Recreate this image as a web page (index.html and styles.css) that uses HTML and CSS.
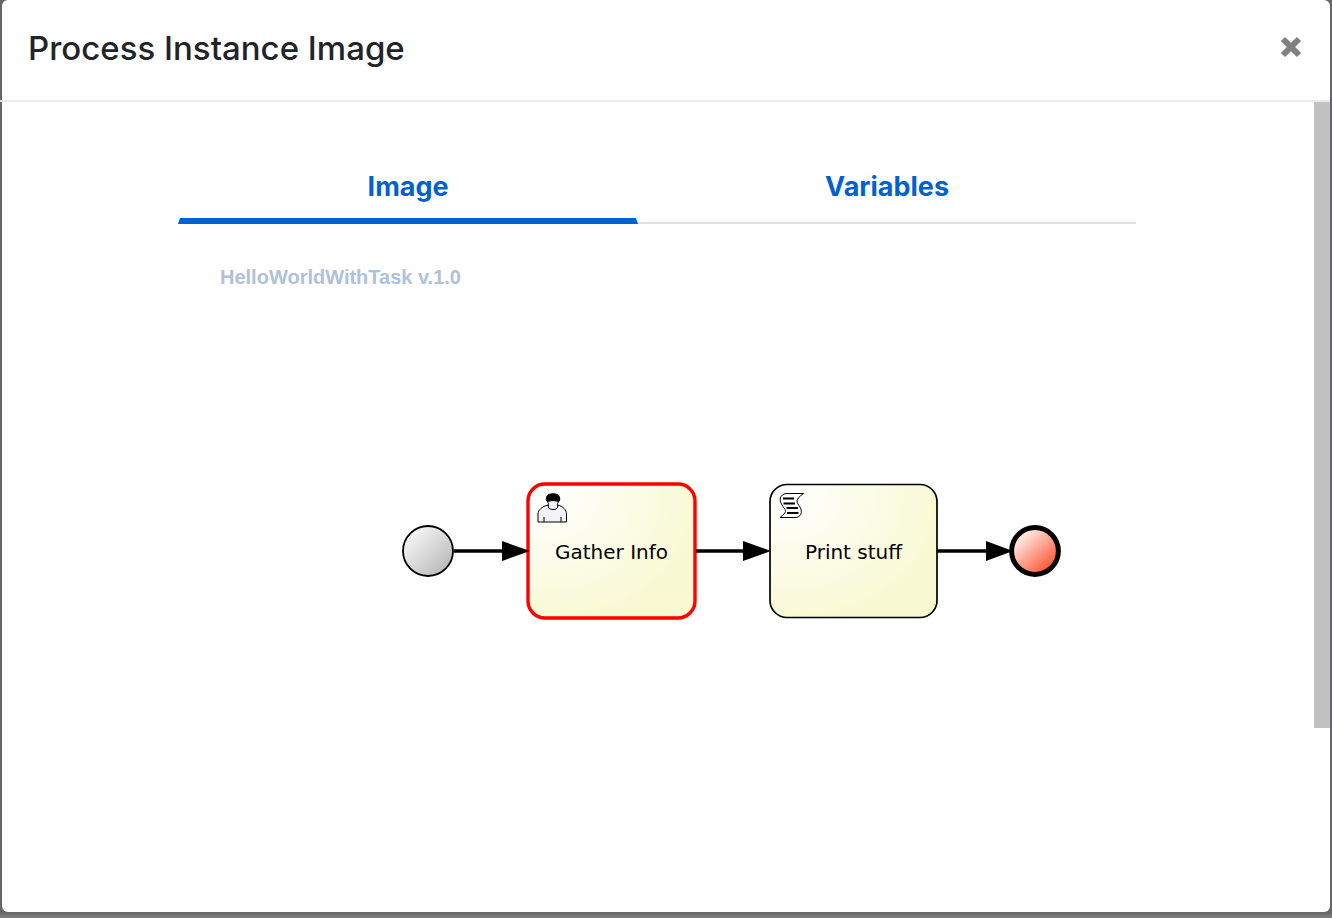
FILE: index.html
```html
<!DOCTYPE html>
<html lang="en">
<head>
<meta charset="utf-8">
<title>Process Instance Image</title>
<link rel="stylesheet" href="styles.css">
</head>
<body>
<div class="backdrop">
  <section class="dialog" role="dialog" aria-labelledby="dialog-title">
    <header class="dialog-header">
      <h1 class="dialog-title" id="dialog-title">Process Instance Image</h1>
      <button class="close" type="button" aria-label="Close">
        <svg class="close-icon" viewBox="0 0 20 20" aria-hidden="true"><path d="M4.600 0.800 10 6.200 15.400 0.800 19.200 4.600 13.800 10 19.200 15.400 15.400 19.200 10 13.800 4.600 19.200 0.800 15.400 6.200 10 0.800 4.600Z"/></svg>
      </button>
    </header>
    <div class="dialog-body">
      <div class="content">
        <div class="tabs" role="tablist">
          <button class="tab tab-active" type="button" role="tab" aria-selected="true">Image</button>
          <button class="tab tab-last" type="button" role="tab" aria-selected="false">Variables</button>
        </div>
        <svg class="diagram" viewBox="0 0 958 480" role="img" aria-label="HelloWorldWithTask process diagram">
          <defs>
            <linearGradient id="start-fill" x1="0.1" y1="0.1" x2="0.9" y2="0.9"><stop offset="0" stop-color="#fafafa"/><stop offset="1" stop-color="#b8b8b8"/></linearGradient>
            <linearGradient id="end-fill" x1="0.1" y1="0.1" x2="0.8" y2="0.9"><stop offset="0" stop-color="#ffffff"/><stop offset="1" stop-color="#ff5533"/></linearGradient>
            <radialGradient id="task-fill" cx="0.1" cy="0.1" r="1"><stop offset="0" stop-color="#ffffff"/><stop offset="1" stop-color="#f8f9d0"/></radialGradient>
          </defs>
          <text class="process-name" x="42" y="60">HelloWorldWithTask v.1.0</text>

          <circle cx="250" cy="327" r="25" fill="url(#start-fill)" stroke="#000" stroke-width="1.800"/>
          <rect x="350" y="260" width="167" height="134" rx="17" fill="url(#task-fill)" stroke="#f00" stroke-width="3.400"/>
          <rect x="592" y="260.500" width="167" height="133" rx="17" fill="url(#task-fill)" stroke="#000" stroke-width="1.700"/>

          <g class="flow">
            <path d="M276 327H334M518 327H576M759 327H818"/>
            <path class="arrow" d="M324 317 352 327 324 337ZM565 317 593 327 565 337ZM808 317 835 327 808 337Z"/>
          </g>
          <circle cx="857" cy="327" r="23.400" fill="url(#end-fill)" stroke="#000" stroke-width="5"/>

          <g class="task-icon">
            <path fill="#f2f3f9" d="M360 298V290C360 286 364 282.500 370 281C371 284 372 285 375 285S379 284 380 281C385 282.500 388.500 286 388.500 290V298ZM366 298V293M383 298V293"/>
            <path fill="#f2f3f9" d="M369.500 277C368 273 371 271.500 375 271.500S382 273 380.500 277C380 279 379 280 379.500 281C380.500 284 378 285.500 375 285.500S369.500 284 370.500 281C371 280 370 279 369.500 277Z"/>
            <path fill="#000" d="M368.500 277C367.500 272 370 269.800 375 269.800S382.500 272 381.500 277C380 277.800 377.500 276.600 375 276.600S370 277.800 368.500 277Z"/>
          </g>
          <g class="task-icon">
            <path fill="#fff" d="M608 269.500H625.500C616.500 276 618.500 278 622 283C625 288 623 293.500 617 293.500H602C609 288 608.500 287 605 282.500C600 276 602 270.500 608 269.500Z"/>
            <path class="script-lines" d="M605 274.500H616M605.500 279.500H617M608.500 284H620M609 289H620.500"/>
          </g>

          <text class="task-name" x="433.500" y="335">Gather Info</text>
          <text class="task-name" x="675.500" y="335">Print stuff</text>
        </svg>
      </div>
      <div class="scroll-track"><div class="scroll-thumb"></div></div>
    </div>
  </section>
</div>
</body>
</html>
```
FILE: styles.css
```css
* {
  box-sizing: border-box;
}

body {
  margin: 0;
  font-family: Inter, "Liberation Sans", sans-serif;
  color: #212529;
}

.backdrop {
  display: flex;
  min-height: 100vh;
  padding: 0 2px 6px;
  background: linear-gradient(to top, #808080, #656667 6px);
}

.dialog {
  display: flex;
  flex: 1;
  flex-direction: column;
  background: #fff;
  border-radius: 6px;
}

.dialog-header {
  display: flex;
  align-items: center;
  justify-content: space-between;
  margin-left: -2px;
  padding: 24px 28px 28px;
  border-bottom: 2px solid #e9ecef;
}

.dialog-title {
  margin: 0;
  font-size: 33px;
  font-weight: 500;
  line-height: 48px;
}

.close {
  display: flex;
  padding: 0 0 2px;
  border: 0;
  background: none;
}

.close-icon {
  width: 22px;
  height: 22px;
  fill: #808080;
}

.dialog-body {
  display: flex;
  flex: 1;
}

.content {
  flex: 1;
  padding: 48px 178px 0 176px;
}

.tabs {
  display: flex;
  border-bottom: 2px solid #dee2e6;
}

.tab {
  flex: 460;
  margin-bottom: -2px;
  padding: 18px 0 12px;
  border: solid transparent;
  border-width: 0 2px 6px;
  background: none;
  color: #0062cf;
  font: 700 27px/38px Inter, "Liberation Sans", sans-serif;
}

.tab-active {
  border-bottom-color: #0062cf;
}

.tab-last {
  flex: 498;
}

.diagram {
  display: block;
  width: 100%;
}

.process-name {
  fill: #b0c1d9;
  font: 700 20px "Liberation Sans", Arial, sans-serif;
}

.task-name {
  font: 20px "DejaVu Sans", Verdana, sans-serif;
  text-anchor: middle;
}

.flow {
  fill: none;
  stroke: #000;
  stroke-width: 3.4;
}

.arrow {
  fill: #000;
  stroke: none;
}

.task-icon {
  stroke: #000;
  stroke-width: 1;
}

.script-lines {
  fill: none;
  stroke-width: 2;
}

.scroll-track {
  width: 16px;
}

.scroll-thumb {
  height: 77.3%;
  background: #c1c1c1;
}
```
